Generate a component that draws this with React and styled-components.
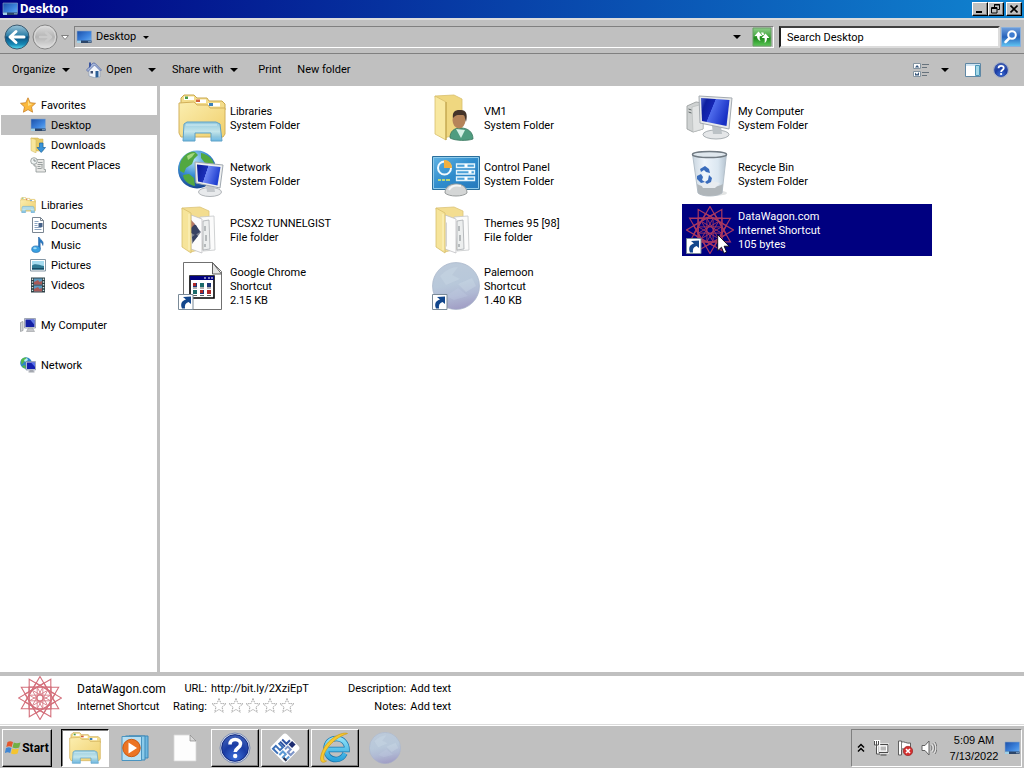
import React, { useState } from "react";
import styled, { createGlobalStyle, css } from "styled-components";

const GlobalStyle = createGlobalStyle`
  * {
    box-sizing: border-box;
  }

  body {
    margin: 0;
    background: #c0c0c0;
    color: #000;
    font-family: Roboto, "Liberation Sans", sans-serif;
    font-size: 11px;
    line-height: 14px;
  }

  button, input {
    font: inherit;
    color: inherit;
  }

  svg {
    display: block;
    flex: none;
  }
`

const Window = styled.div`
  display: flex;
  flex-direction: column;
  min-height: 100vh;
`

const TitleBar = styled.header`
  display: flex;
  align-items: center;
  height: 18px;
  padding: 0 2px;
  gap: 2px;
  background: linear-gradient(to right, #000082, #1084d0);
`

const WindowTitle = styled.h1`
  flex: 1;
  margin: 0;
  color: #fff;
  font-size: 13px;
  line-height: 16px;
  font-weight: 700;
`

const plainButton = css`
  display: flex;
  align-items: center;
  justify-content: center;
  padding: 0;
  border: none;
  background: none;
`

const raised = css`
  border: 1px solid;
  border-color: #fff #000 #000 #fff;
  box-shadow: inset -1px -1px 0 #808080;
`

const CaptionButton = styled.button`
  ${plainButton}
  ${raised}
  width: 16px;
  height: 14px;
  margin-left: ${({ $apart }) => ($apart ? "0" : "-2px")};
  background: #c0c0c0;
`

const NavBar = styled.nav`
  display: flex;
  align-items: center;
  height: 36px;
  padding: 1px 2px 0 4px;
  border-top: 2px solid #dcdcdc;
  border-bottom: 1px solid #808080;
  box-shadow: 0 1px 0 #fff;
  background: #c0c0c0;
`

const NavButton = styled.button`
  ${plainButton}
  width: ${({ $width }) => $width}px;
  height: 28px;
`

const AddressBar = styled.div`
  display: flex;
  flex: 1;
  align-items: center;
  gap: 4px;
  height: 22px;
  margin: 0 5px 0 4px;
  padding-left: 1px;
  border: 1px solid;
  border-color: #808080 #fff #fff #808080;
`

const AddressPath = styled.button`
  ${plainButton}
  flex: 1;
  justify-content: flex-start;
  gap: 4px;
`

const PathName = styled.span`
  margin-right: 3px;
`

const IconButton = styled.button`
  ${plainButton}
  width: ${({ $width }) => $width || 20}px;
  height: 20px;
`

const SearchInput = styled.input`
  width: 221px;
  height: 22px;
  padding: 0 6px;
  border: 2px solid;
  border-color: #404040 #dcdcdc #dcdcdc #202020;
  background: #fff;
  outline: none;

  &::placeholder {
    color: #000;
    opacity: 1;
  }
`

const Toolbar = styled.div`
  display: flex;
  align-items: center;
  height: 32px;
  padding: 0 15px 0 12px;
  background: #c0c0c0;
`

const ToolButton = styled.button`
  ${plainButton}
  gap: ${({ $gap }) => $gap || 7}px;
  margin-right: ${({ $after }) => $after || 16}px;
`

const Spacer = styled.div`
  flex: 1;
`

const Main = styled.div`
  display: flex;
  flex: 1;
  background: #fff;
`

const Sidebar = styled.aside`
  width: 160px;
  padding: 9px 0 0 1px;
  border-right: 3px solid #c0c0c0;
`

const NavGroup = styled.ul`
  margin: 0 0 20px;
  padding: 0;
  list-style: none;
`

const NavLink = styled.a`
  display: flex;
  align-items: center;
  gap: 5px;
  height: 20px;
  padding-left: ${({ $child }) => ($child ? 29 : 19)}px;
  background: ${({ $active }) => ($active ? "#c0c0c0" : "none")};
  color: #000;
  text-decoration: none;
`

const Label = styled.span`
  padding-top: 2px;
`

const Files = styled.main`
  display: grid;
  flex: 1;
  grid-template-columns: repeat(auto-fill, 250px);
  grid-auto-rows: 52px;
  align-content: start;
  gap: 4px;
  padding: 6px 14px;
`

const FileItem = styled.button`
  ${plainButton}
  position: relative;
  justify-content: flex-start;
  gap: 4px;
  padding-left: 4px;
  background: ${({ $selected }) => ($selected ? "#000080" : "none")};
  color: ${({ $selected }) => ($selected ? "#fff" : "#000")};
  text-align: left;
`

const FileText = styled.span`
  display: flex;
  flex-direction: column;
  padding-top: 2px;
`

const Pointer = styled.svg`
  position: absolute;
  left: 35px;
  top: 30px;
`

const Details = styled.section`
  display: flex;
  align-items: flex-start;
  height: 52px;
  padding: 0 18px;
  border-top: 4px solid #c0c0c0;
  background: #fff;
`

const DetailsName = styled.div`
  width: 96px;
  margin-left: 15px;
  padding-top: 4px;
  line-height: 18px;
`

const DetailsTitle = styled.div`
  font-size: 12px;
`

const Properties = styled.dl`
  display: grid;
  grid-template-columns: auto auto;
  grid-auto-rows: 18px;
  column-gap: 4px;
  margin: 0 39px 0 0;
  padding-top: 4px;
  line-height: 18px;

  dt {
    text-align: right;
  }

  dd {
    margin: 0;
  }
`

const Stars = styled.dd`
  display: flex;
  gap: 1px;
`

const Taskbar = styled.footer`
  display: flex;
  align-items: center;
  gap: 2px;
  height: 44px;
  padding: 2px 2px 0;
  border-top: 1px solid #dcdcdc;
  box-shadow: inset 0 1px 0 #fff;
  background: #c0c0c0;
`

const StartButton = styled.button`
  ${plainButton}
  ${raised}
  gap: 1px;
  width: 50px;
  height: 38px;
  margin-right: 7px;
  font-size: 12px;
  font-weight: 700;
`

const TaskButton = styled.button`
  ${plainButton}
  width: 48px;
  height: 38px;
  ${({ $open }) => $open && raised}
  ${({ $active }) => $active && css`
    border: 1px solid;
    border-color: #000 #fff #fff #000;
    box-shadow: inset 1px 1px 0 #808080;
    background: #fff;
  `}
`

const Tray = styled.div`
  display: flex;
  align-items: center;
  height: 38px;
  padding: 0 1px 0 5px;
  gap: 8px;
  border: 1px solid;
  border-color: #808080 #fff #fff #808080;
`

const Clock = styled.time`
  min-width: 52px;
  margin: 0 -4px 0 3px;
  font-family: "Liberation Sans", Arial, sans-serif;
  line-height: 16px;
  text-align: center;
`

const Caret = ({ size = 8 }) => (
  <svg width={size} height={size / 2} viewBox="0 0 8 4">
    <path d="M0 0h8L4 4z" fill="#000" />
  </svg>
)

const DesktopIcon = ({ size = 16 }) => (
  <svg width={size} height={size} viewBox="0 0 16 16">
    <defs>
      <linearGradient id="desk" x1="0" y1="0" x2="1" y2="1">
        <stop offset="0" stopColor="#1a4fa8" />
        <stop offset="0.6" stopColor="#3f86e0" />
        <stop offset="1" stopColor="#6fb2f0" />
      </linearGradient>
    </defs>
    <path d="M1 2h14.500v11H1z" fill="url(#desk)" stroke="#8fa6c4" strokeWidth="0.600" />
    <path d="M1 11.500h14.500V14H1z" fill="#2c4568" />
    <path d="M1 11.500h4V14H1z" fill="#9fd0e8" />
    <path d="M12 12.300h3v1h-3z" fill="#8fb0d0" />
  </svg>
)

const BackIcon = () => (
  <svg width="26" height="26" viewBox="0 0 26 26">
    <defs>
      <linearGradient id="back" x1="0" y1="0" x2="0" y2="1">
        <stop offset="0" stopColor="#9cc4d8" />
        <stop offset="0.450" stopColor="#2c7ea8" />
        <stop offset="0.500" stopColor="#0a5080" />
        <stop offset="0.800" stopColor="#1687b4" />
        <stop offset="1" stopColor="#5ce0f4" />
      </linearGradient>
    </defs>
    <circle cx="13" cy="13" r="12" fill="url(#back)" stroke="#3a5a70" />
    <path d="M6 13l6-5.500M6 13l6 5.500M6.500 13H20" fill="none" stroke="#fff" strokeWidth="3" strokeLinecap="round" />
  </svg>
)

const ForwardIcon = () => (
  <svg width="26" height="26" viewBox="0 0 26 26">
    <defs>
      <linearGradient id="fwd" x1="0" y1="0" x2="0" y2="1">
        <stop offset="0" stopColor="#dedede" />
        <stop offset="0.500" stopColor="#b4b4b4" />
        <stop offset="1" stopColor="#e4e4e4" />
      </linearGradient>
    </defs>
    <circle cx="13" cy="13" r="12" fill="url(#fwd)" stroke="#868686" />
    <circle cx="13" cy="13" r="10.500" fill="none" stroke="#dcdcdc" />
    <path d="M19 13l-5-4.500M19 13l-5 4.500M18.500 13H8" fill="none" stroke="#cacaca" strokeWidth="2.500" strokeLinecap="round" />
  </svg>
)

const RefreshIcon = () => (
  <svg width="20" height="20" viewBox="0 0 20 20">
    <defs>
      <linearGradient id="refresh" x1="0" y1="0" x2="0" y2="1">
        <stop offset="0" stopColor="#8fce8c" />
        <stop offset="0.450" stopColor="#45a840" />
        <stop offset="0.550" stopColor="#1f8a1c" />
        <stop offset="1" stopColor="#5cc858" />
      </linearGradient>
    </defs>
    <path d="M1 1h18v18H1z" fill="url(#refresh)" stroke="#68a066" />
    <path d="M6.500 4.500L2.500 9H5c0 2.500 1 4 3.500 5C7.500 12.500 7.500 11 7.800 9h2.700z" fill="#fff" />
    <path d="M9 5.500h2.500c0 1 .3 1.800.7 2.500h-2zM13.500 6.500l4 4.500H15c0 2.500-.8 4-2.500 5 .4-1.500.3-3.300 0-5h-2.800z" fill="#fff" />
  </svg>
)

const SearchIcon = () => (
  <svg width="20" height="20" viewBox="0 0 20 20">
    <defs>
      <linearGradient id="search" x1="0" y1="0" x2="0" y2="1">
        <stop offset="0" stopColor="#6f9fdc" />
        <stop offset="0.500" stopColor="#2763bb" />
        <stop offset="1" stopColor="#62c8f4" />
      </linearGradient>
    </defs>
    <path d="M0.500 0.500h19v19h-19z" fill="url(#search)" stroke="#8ab0dc" />
    <path d="M8.500 11L4.500 15" stroke="#fff" strokeWidth="2.500" strokeLinecap="round" />
    <circle cx="11" cy="8" r="3.800" fill="#3f7cd0" stroke="#fff" strokeWidth="2" />
  </svg>
)

const HouseIcon = () => (
  <svg width="16" height="16" viewBox="0 0 16 16">
    <path d="M3 8l5.500-6L14 8v7l-5 .8L3 14z" fill="#f2f5fa" stroke="#8b9cb5" strokeWidth="0.700" />
    <path d="M0.500 8L7 1l2 .2L15.500 8l-1 1L8.500 3 2 9.500z" fill="#a8b8da" stroke="#4a62a0" strokeWidth="0.700" />
    <path d="M3 .5h2V4L3 6z" fill="#3a55a0" />
    <path d="M9.500 9h3v6l-3 .5z" fill="#2a5f96" />
    <path d="M4.500 9h2.500v2.500H4.500z" fill="#3d4f74" />
  </svg>
)

const ViewIcon = () => (
  <svg width="16" height="16" viewBox="0 0 16 16">
    <path d="M.5 1.500h7v5h-7zM.5 9.500h7v5h-7z" fill="#fff" stroke="#8494a0" />
    <path d="M2 5.500l2-2.500 2.500 2.500zM2 13.500v-3l2 2 2-2.500v3.500z" fill="#35557a" />
    <path d="M9 2.500h7M9 5.500h5M9 10.500h7M9 13.500h5" stroke="#66727c" />
  </svg>
)

const PaneIcon = () => (
  <svg width="16" height="16" viewBox="0 0 16 16">
    <path d="M0.500 1.500h15v13h-15z" fill="#fff" stroke="#5f87a4" />
    <path d="M1 2h14v2H1z" fill="#cfe4f2" />
    <path d="M10.500 3.500h4v10h-4z" fill="#a4d8e8" stroke="#4a96b8" />
  </svg>
)

const HelpIcon = ({ size = 16 }) => (
  <svg width={size} height={size} viewBox="0 0 32 32">
    <defs>
      <radialGradient id="help" cx="0.500" cy="0.850" r="0.900">
        <stop offset="0" stopColor="#3d70d8" />
        <stop offset="0.500" stopColor="#1a3ca4" />
        <stop offset="1" stopColor="#4567bc" />
      </radialGradient>
    </defs>
    <circle cx="16" cy="16" r="15" fill="#d4dcec" stroke="#7a8cb4" />
    <circle cx="16" cy="16" r="13.300" fill="url(#help)" stroke="#102880" />
    <path d="M11 12.500c0-3 2-5 5.200-5s5.300 1.800 5.300 4.500c0 4-5.300 4-5.300 8" fill="none" stroke="#fff" strokeWidth="3.500" />
    <circle cx="16.200" cy="24" r="2.200" fill="#fff" />
  </svg>
)

const StarIcon = () => (
  <svg width="16" height="16" viewBox="0 0 16 16">
    <path d="M8 .8l2.200 4.900 5.300.6-4 3.600 1.100 5.300L8 12.600l-4.600 2.600 1.100-5.300-4-3.600 5.300-.6z" fill="#fbb93c" stroke="#c9822a" strokeWidth="0.800" />
    <path d="M8 3l1.300 3.500 3.200.5L8 9z" fill="#fee08a" />
  </svg>
)

const DownloadsIcon = () => (
  <svg width="16" height="16" viewBox="0 0 16 16">
    <path d="M1 1h7l1 1h4v12H4z" fill="#e8cc68" stroke="#c7a84a" strokeWidth="0.500" />
    <path d="M1 1l5 1.500V16L1 13.500z" fill="#f8e69c" stroke="#cdb15a" strokeWidth="0.500" />
    <path d="M9.500 6h3.500v4.500h2.500L11.200 15.500 7 10.500h2.500z" fill="#3b94d8" stroke="#1a64a8" strokeWidth="0.700" />
  </svg>
)

const RecentIcon = () => (
  <svg width="16" height="16" viewBox="0 0 16 16">
    <path d="M4 2.500h10v10h1.500V15H6V9H4z" fill="#e8e8e6" stroke="#8e9494" strokeWidth="0.800" />
    <path d="M8 5.500h4.500M7.500 7.500h5M7.500 9.500h3M7.500 11.500h4M12 11.500V7" stroke="#9aa0a0" />
    <circle cx="4" cy="4" r="3.300" fill="#eef2f2" stroke="#8a9292" strokeWidth="0.800" />
    <path d="M4 2v2h2" fill="none" stroke="#7b8383" strokeWidth="0.900" />
  </svg>
)

const LibrariesIcon = ({ size = 48 }) => (
  <svg width={size} height={size} viewBox="0 0 48 48">
    <defs>
      <linearGradient id="libf" x1="0" y1="0" x2="1" y2="1">
        <stop offset="0" stopColor="#fbeeb0" />
        <stop offset="1" stopColor="#f0cf6c" />
      </linearGradient>
      <linearGradient id="libs" x1="0" y1="0" x2="0" y2="1">
        <stop offset="0" stopColor="#8cc8e4" />
        <stop offset="0.500" stopColor="#bfe6f4" />
        <stop offset="1" stopColor="#5fb0dc" />
      </linearGradient>
    </defs>
    <path d="M3 12V4l3-3h10l3 3h10l2 3h13l3 3v6z" fill="#f4dd8c" stroke="#c9a94e" />
    <path d="M6 2.500h10V6H6zM18 5.500h10V9H18zM30 9h12v3.500H30z" fill="#fff" />
    <path d="M7 2.500h3V5H7z" fill="#4a9a48" />
    <path d="M18 5.500h4V8h-4z" fill="#d0603a" />
    <path d="M31 9h4v3h-4z" fill="#3c80b8" />
    <path d="M1 9l15-1 3 3h11l2 3h15v26l-2 3H3l-2-4z" fill="url(#libf)" stroke="#d2b05a" />
    <path d="M6 30l3-2h29l4 2 2 17H33V39H17v8H5z" fill="url(#libs)" fillOpacity="0.920" stroke="#5fa2c8" />
    <path d="M8 31h31" stroke="#e6f8fe" strokeOpacity="0.700" />
  </svg>
)

const DocumentsIcon = () => (
  <svg width="16" height="16" viewBox="0 0 16 16">
    <path d="M2.500.500h8l3 3v12h-11z" fill="#fff" stroke="#7b8692" />
    <path d="M10.500.500v3h3" fill="none" stroke="#7b8692" />
    <path d="M4.500 4.500h4M4.500 6.500h3M4.500 8.500h3M4.500 10.500h7M4.500 12.500h7" stroke="#8ca4c0" />
    <path d="M8.500 6h4v4h-4z" fill="#46628a" />
  </svg>
)

const MusicIcon = () => (
  <svg width="16" height="16" viewBox="0 0 16 16">
    <path d="M9 0c1 3 5.500 3.500 3.800 8.500C12.500 6 11 5.300 10.200 5.200V12H8.500V0z" fill="#2878c0" stroke="#1c5ca0" strokeWidth="0.500" />
    <ellipse cx="6" cy="12.200" rx="4.300" ry="3.300" fill="#3aa0e0" stroke="#1c68ac" strokeWidth="0.600" />
    <ellipse cx="5" cy="11.300" rx="1.800" ry="1" fill="#a0dcf8" />
  </svg>
)

const PicturesIcon = () => (
  <svg width="16" height="16" viewBox="0 0 16 16">
    <path d="M.5 2.500h15v11.500H.5z" fill="#fff" stroke="#8496a4" />
    <path d="M2 4h12v8.500H2z" fill="#a6dcf0" />
    <path d="M2 8.500c3-2.500 6-1 12 .5v3.500H2z" fill="#2f7a94" />
    <path d="M2 11h12v1.500H2z" fill="#164c66" />
  </svg>
)

const VideosIcon = () => (
  <svg width="16" height="16" viewBox="0 0 16 16">
    <path d="M1 .5h14v15H1z" fill="#2c4046" />
    <path d="M4 1.500h8v6H4zM4 8.500h8v6H4z" fill="#5d9ac0" />
    <path d="M4 5l4-2 1.500 2L12 4v3.500H4zM4 12l4-2 1.500 2L12 11v3.500H4z" fill="#a85a58" />
    <path d="M2.500 1.500v13M13.500 1.500v13" stroke="#d4e4e4" strokeWidth="1.400" strokeDasharray="1.400 1.400" />
  </svg>
)

const SmallComputerIcon = () => (
  <svg width="16" height="16" viewBox="0 0 16 16">
    <path d="M.5 5.500L3 4.500v9l-2.500 1z" fill="#d4d6d8" stroke="#8c9094" strokeWidth="0.700" />
    <path d="M4.500 1.500h11v9.500h-11z" fill="#e0e2e6" stroke="#8c94a4" strokeWidth="0.800" />
    <path d="M5.500 2.500h9v7.500h-9z" fill="#1420a4" />
    <path d="M10 2.500h4.500V8z" fill="#6078e4" />
    <path d="M8.500 11h4l2 3.500h-8z" fill="#c4c6ca" stroke="#989ca0" strokeWidth="0.600" />
  </svg>
)

const SmallNetworkIcon = () => (
  <svg width="16" height="16" viewBox="0 0 16 16">
    <circle cx="6" cy="6" r="5.800" fill="#2f86c8" />
    <path d="M1 3c2-3 5-3 6-2L4 5 1.500 8zM2 9l3-1 1 3.500C4 11.500 2.500 10.500 2 9z" fill="#54b848" />
    <path d="M4 3l3-2 1 2-3 2z" fill="#b8ecf8" />
    <path d="M6 4.500h9.500V13H6z" fill="#d8dce4" stroke="#6c7898" strokeWidth="0.600" />
    <path d="M7 5.500h8V12H7z" fill="#1420b0" />
    <path d="M11 5.500h4v4.500z" fill="#5870ec" />
    <path d="M9.500 13h4v1.300h1v1.200H8.500v-1.200h1z" fill="#a4a8b0" />
  </svg>
)

const ComputerIcon = () => (
  <svg width="48" height="48" viewBox="0 0 48 48">
    <defs>
      <linearGradient id="screen" x1="0" y1="0" x2="1" y2="0.400">
        <stop offset="0" stopColor="#4a60d0" />
        <stop offset="0.200" stopColor="#0e1fa0" />
        <stop offset="0.450" stopColor="#1626b4" />
        <stop offset="0.470" stopColor="#4f6cec" />
        <stop offset="1" stopColor="#1830c4" />
      </linearGradient>
    </defs>
    <path d="M1 12l9-4 7 1v26l-10 3-6-3z" fill="#cfd2d2" stroke="#a4a8a8" />
    <path d="M6 13l11-3v25L7 38z" fill="#e2e4e4" stroke="#b4b8b8" strokeWidth="0.600" />
    <path d="M2.500 15l3 1M2.500 18l3 1" stroke="#606868" />
    <ellipse cx="30" cy="40.500" rx="13" ry="4.500" fill="#e4e6e8" stroke="#aab0b4" />
    <path d="M26 32h9l1 8h-9z" fill="#bcc2c6" />
    <path d="M13 2l33 2-3 31-29-6z" fill="#e8eaea" stroke="#a4aab0" />
    <path d="M15 4l28.500 2-3 26L16 27z" fill="url(#screen)" />
  </svg>
)

const NetworkIcon = () => (
  <svg width="48" height="48" viewBox="0 0 48 48">
    <defs>
      <radialGradient id="globe" cx="0.400" cy="0.250" r="0.800">
        <stop offset="0" stopColor="#b4e4fa" />
        <stop offset="0.500" stopColor="#3a8cd4" />
        <stop offset="1" stopColor="#123c86" />
      </radialGradient>
      <linearGradient id="netscreen" x1="0" y1="0" x2="1" y2="0.300">
        <stop offset="0" stopColor="#0c1c98" />
        <stop offset="0.450" stopColor="#1c30b8" />
        <stop offset="0.470" stopColor="#7088f4" />
        <stop offset="1" stopColor="#2040d0" />
      </linearGradient>
    </defs>
    <circle cx="19" cy="19.500" r="19" fill="url(#globe)" />
    <path d="M4 9C8 3 13 1 17 2l3 3-4 4-2 5-6 4-2 5-4-2C1 17 2 12 4 9zM5 25l6-1 5 4 1 8c-6-1-12-6-12-11zM23 3c6 1 12 6 13 11l-4 1-5-2-4-5z" fill="#52a840" />
    <path d="M9 6c3-2 5-3 8-3l-3 4-4 3z" fill="#a4d880" />
    <ellipse cx="32" cy="42" rx="11.500" ry="4.500" fill="#e8eaec" stroke="#b0b4b8" />
    <path d="M28 35h8l1 7h-8z" fill="#c4c8cc" />
    <path d="M17 12l28 3-3 23-24-5z" fill="#eef0f0" stroke="#a0a8b0" />
    <path d="M19 14.500l23.500 2.500-3 18.500L20 31.500z" fill="url(#netscreen)" />
  </svg>
)

const UserFolderIcon = () => (
  <svg width="48" height="48" viewBox="0 0 48 48">
    <path d="M3 2l19-1 8 4v34l-18 5z" fill="#efd780" stroke="#d8bf6c" strokeWidth="0.800" />
    <path d="M3 2l11 6v38L3 40z" fill="#f8e8a0" stroke="#d8bf6c" strokeWidth="0.800" />
    <path d="M14 8v38" stroke="#b99b40" />
    <path d="M18 44c0-7 4-10 11-10s12 4 12 11c-5 2-18 2-23-1z" fill="#4f9c80" stroke="#36755c" strokeWidth="0.800" />
    <path d="M24 35l5 9 4-8z" fill="#d6f0e6" />
    <ellipse cx="27" cy="26" rx="6.500" ry="8.500" fill="#b5845a" />
    <path d="M21 24c-1-6 2-8.500 8-8 5 0 7 4 5 12-1-3-1-7-3-7-4 0-7-1-10 3z" fill="#44342a" />
  </svg>
)

const ControlPanelIcon = () => (
  <svg width="48" height="48" viewBox="0 0 48 48">
    <defs>
      <linearGradient id="cp" x1="0" y1="0" x2="1" y2="1">
        <stop offset="0" stopColor="#62b4e4" />
        <stop offset="0.500" stopColor="#2f8ccc" />
        <stop offset="1" stopColor="#2478bc" />
      </linearGradient>
    </defs>
    <path d="M.5 6.500h47v33H.5z" fill="url(#cp)" stroke="#2b6f9c" />
    <path d="M1.500 7.500h45v31h-45z" fill="none" stroke="#90ccec" />
    <circle cx="12.500" cy="18" r="6.500" fill="none" stroke="#f2fafe" strokeWidth="2" />
    <path d="M12 18V10a7.500 7.500 0 0 1 8 8z" fill="#f0b040" />
    <path d="M6 30h3M10 30h3M14 30h4" stroke="#b8d878" strokeWidth="2" />
    <path d="M24.500 14h18v3.500h-18zM24.500 20.500h18V24h-18zM24.500 27h18v3.500h-18z" fill="#4aa0d8" stroke="#e4f4fc" strokeWidth="1.300" />
    <path d="M34 14v3M38 20.500v3M34 27v3" stroke="#fff" strokeWidth="3" />
    <path d="M13 43c0-6 5-9 11-9s11 3 11 9c-4 4-18 4-22 0z" fill="#d4d6d6" stroke="#989c9c" />
    <path d="M17 40c2-4 7-5 12-4" fill="none" stroke="#f4f4f4" strokeWidth="2" />
  </svg>
)

const RecycleBinIcon = () => (
  <svg width="48" height="48" viewBox="0 0 48 48">
    <defs>
      <linearGradient id="bin" x1="0" y1="0" x2="1" y2="0">
        <stop offset="0" stopColor="#c8d4de" />
        <stop offset="0.350" stopColor="#eff5fb" />
        <stop offset="0.750" stopColor="#dbe7f1" />
        <stop offset="1" stopColor="#b4c2ce" />
      </linearGradient>
    </defs>
    <ellipse cx="27" cy="43" rx="14" ry="3" fill="#e2e4e4" />
    <path d="M6.500 4h34L36 43c-5 4-20 4-24 0z" fill="url(#bin)" stroke="#b4c0ca" />
    <path d="M11 34c6 4 20 4 26 0l-1 9c-5 4-20 4-24 0z" fill="#b0b6ba" />
    <path d="M14 33l8-3 12 3-5 5H17z" fill="#e8ecf0" />
    <ellipse cx="23.500" cy="4.500" rx="17" ry="3" fill="#dfe7ed" stroke="#707a82" strokeWidth="1.500" />
    <path d="M14 19l5-3 4 3 1 4-4-1-2-2-3 2zM11 26l4-2 2 3-1 3 3 2-4 1-4-4zM19 32l3-2 1-5 3 3-1 4-4 2z" fill="#3a6cbc" />
  </svg>
)

const FolderIcon = ({ photo }) => (
  <svg width="48" height="48" viewBox="0 0 48 48">
    <path d="M4 2l18-1 9 4v36l-18 5z" fill="#f3dd90" stroke="#dcc47a" strokeWidth="0.800" />
    <path d="M22 11l14-1 1 34-12 1z" fill="#fbfbfb" stroke="#c4c6c8" strokeWidth="0.800" />
    <path d="M25 15l6-1 1 29-7 1z" fill="#eceeee" stroke="#a8acb0" strokeWidth="0.800" />
    <path d="M27 20v5M28 29v6M27 38v3" stroke="#80868a" />
    <path d="M13 9l11 4v34l-11-4z" fill="#fcfcfc" stroke="#c0c0c4" strokeWidth="0.800" />
    {photo ? (
      <g>
        <path d="M13 14l10 12-9 12z" fill="#7c8290" />
        <path d="M13 17l5 2 4 7-5 3-4-2zM14 31l4-3 2 2-5 6z" fill="#384262" />
        <path d="M13 14l4 4-4 4z" fill="#b47868" />
      </g>
    ) : (
      <path d="M14 16l1 1v24l-1-1z" fill="#d4d4d4" />
    )}
    <path d="M4 2l9 5v40L4 41z" fill="#f6e49a" stroke="#d8bf6c" strokeWidth="0.800" />
    <path d="M11 8v36" stroke="#fdf4c4" />
  </svg>
)

const ShortcutArrow = () => (
  <g>
    <path d="M.5 32.500h14.500v15H.5z" fill="#fff" stroke="#7a8a98" />
    <path d="M4 46.500c-2-5 0-8 4-9l-3-2.500 8-.5v7.500l-2.500-2c-3 1-4 3-3.500 6.500z" fill="#12468c" />
  </g>
)

const ProgramIcon = () => (
  <svg width="48" height="48" viewBox="0 0 48 48">
    <path d="M5.500.500h29l9 9v38h-38z" fill="#fff" stroke="#707070" />
    <path d="M34.500.500v11.500h9z" fill="#e4e4e4" stroke="#606060" />
    <path d="M12 14h24v22H12z" fill="#fff" stroke="#000" strokeWidth="1.600" />
    <path d="M12 14h24v4H12z" fill="#000080" />
    <path d="M26 16h2M30 16h2M33 16h2" stroke="#fff" />
    <path d="M15 21h4v4h-4zM22 28h4v4h-4zM29 21h4v4h-4z" fill="#203878" />
    <path d="M22 21h4v4h-4zM15 28h4v4h-4z" fill="#1a6a6a" />
    <path d="M15 21h3v3h-3zM29 28h4v4h-4zM22 28h3v3h-3z" fill="#b02828" />
    <path d="M15 26h4M22 26h4M29 26h4M15 33.500h4M22 33.500h4M29 33.500h4" stroke="#606060" />
    <ShortcutArrow />
  </svg>
)

const MoonIcon = ({ size = 48, shortcut }) => (
  <svg width={size} height={size} viewBox="0 0 48 48">
    <defs>
      <linearGradient id="moon" x1="0.400" y1="0" x2="0.600" y2="1">
        <stop offset="0" stopColor="#bccada" />
        <stop offset="0.450" stopColor="#b8c8da" />
        <stop offset="0.700" stopColor="#b0bad4" />
        <stop offset="1" stopColor="#a09cc4" />
      </linearGradient>
    </defs>
    <circle cx="24" cy="24" r="23.500" fill="url(#moon)" stroke="#a8b4c8" strokeWidth="0.700" />
    <path d="M8 14c6-6 12-9 18-9l-6 8 8 4-14 6zM26 22l14-6 4 8-10 6z" fill="#cfdde8" fillOpacity="0.350" />
    <path d="M14 34l12-8 10 8-14 4z" fill="#c4cce4" fillOpacity="0.300" />
    {shortcut && <ShortcutArrow />}
  </svg>
)

const starPoints = (count, step, radius, turn = 0) => {
  const points = []
  for (let i = 0; i < count; i++) {
    const angle = ((i * step * 360) / count + turn - 90) * (Math.PI / 180)
    points.push(`${(24 + radius * Math.cos(angle)).toFixed(1)},${(24 + radius * Math.sin(angle)).toFixed(1)}`)
  }
  return points.join(" ")
}

// outer ring of overlapping triangles, smaller rings turned in between
const WagonIcon = ({ size = 48, color = "#d4707c", shortcut }) => (
  <svg width={size} height={size} viewBox="0 0 48 48">
    <g fill="none" stroke={color}>
      {[0, 30, 60, 90].map((turn) => (
        <polygon key={turn} points={starPoints(3, 1, 23.500, turn)} strokeWidth="1.200" />
      ))}
      {[15, 45, 75].map((turn) => (
        <polygon key={turn} points={starPoints(4, 1, 17, turn)} strokeWidth="1.200" />
      ))}
      <polygon points={starPoints(12, 5, 12, 15)} strokeWidth="0.900" />
    </g>
    {shortcut && <ShortcutArrow />}
  </svg>
)

const RatingStar = () => (
  <svg width="16" height="16" viewBox="0 0 16 16">
    <path d="M8 .5l1.900 5 5.100.3-4 3.300 1.300 5.100L8 11.400l-4.300 2.800L5 9.100 1 5.800l5.100-.3z" fill="#fff" stroke="#a4a4a4" strokeDasharray="1.500 0.800" />
  </svg>
)

const WindowsLogo = () => (
  <svg width="16" height="16" viewBox="0 0 16 16">
    <path d="M2.500 2c2-1.200 3.500-1 5.500 0L6.700 7C4.800 6 3.300 6 1.300 7z" fill="#e4572e" />
    <path d="M8.800 2.500c2 1 3.900 1 6.700 0L14.200 7.500c-2.200 1-4.500 1-6.700 0z" fill="#72b043" />
    <path d="M1 8c2-1 3.500-1 5.400 0L5.200 13C3.300 12 2 12-.2 13z" fill="#3f86d4" />
    <path d="M7.200 8.500c2 1 4.300 1 6.700 0L12.600 13.500c-2 1-4.600 1-6.600 0z" fill="#f4c430" />
  </svg>
)

const MediaIcon = () => (
  <svg width="28" height="28" viewBox="0 0 28 28">
    <path d="M8 2h19v22H8z" fill="#6fb8e0" stroke="#3c88b8" />
    <path d="M4.500 2h19.500v24H4.500z" fill="#8ccbea" stroke="#3c88b8" />
    <path d="M1 2.500h19.500v24H1z" fill="#b8dff2" stroke="#4a94c0" />
    <circle cx="10.500" cy="14" r="8.700" fill="#ec7424" stroke="#c85a14" />
    <path d="M7.500 8.500l8.500 5.500-8.500 5.500z" fill="#fff" />
  </svg>
)

const PageIcon = () => (
  <svg width="24" height="28" viewBox="0 0 24 28">
    <path d="M1 1h16l6 6v20H1z" fill="#fdfdfd" stroke="#d8d8d8" strokeWidth="0.800" />
    <path d="M17 1v6h6z" fill="#d8d8d8" stroke="#888" strokeWidth="0.700" />
  </svg>
)

const Pcsx2Icon = () => (
  <svg width="32" height="32" viewBox="0 0 32 32">
    <g transform="rotate(-45 16 16)">
      <rect x="5" y="5" width="22" height="22" rx="3" fill="#fff" />
      <g fill="none" strokeWidth="2">
        <path d="M7 15V8h4v6h4V8" stroke="#3c70b8" />
        <path d="M17 15V8M20 8v6h5" stroke="#3054a4" />
        <path d="M7 17h5v4H8v4h5" stroke="#5c9ad4" />
        <path d="M15 17h4v4h-4v4h5" stroke="#7c94c8" />
      </g>
      <path d="M21 16h5v5h-5z" fill="#1c2c70" />
      <path d="M7 23h2v4H7z" fill="#303048" transform="translate(0 -1)" />
    </g>
  </svg>
)

const ExplorerIcon = () => (
  <svg width="32" height="32" viewBox="0 0 32 32">
    <defs>
      <linearGradient id="ie" x1="0" y1="0" x2="0" y2="1">
        <stop offset="0" stopColor="#8ce0f8" />
        <stop offset="1" stopColor="#2ca4dc" />
      </linearGradient>
    </defs>
    <path d="M9 17.500h19c0-6-4-11-10.500-11S7 11 7 17s4 10.500 10 10.500c4 0 7-2 9-6" fill="none" stroke="#1a78b0" strokeWidth="5.500" />
    <path d="M9 17.500h19c0-6-4-11-10.500-11S7 11 7 17s4 10.500 10 10.500c4 0 7-2 9-6" fill="none" stroke="url(#ie)" strokeWidth="4" />
    <path d="M28.500 1.500C22-1 4 9 1.500 26c0 5 3 5 6 3-8 0 1-21 21-27.500z" fill="#f6c830" stroke="#cf9c18" strokeWidth="0.700" />
  </svg>
)

const TrayNetworkIcon = () => (
  <svg width="16" height="16" viewBox="0 0 16 16">
    <path d="M5.500 4.500h10v8h-10z" fill="#b8b8b8" stroke="#fff" strokeWidth="2" />
    <path d="M5.500 4.500h9.500v8H5.500zM7.500 15h6" fill="none" stroke="#484848" />
    <path d="M7 6h6.500v5H7z" fill="none" stroke="#fff" />
    <path d="M1 1h5v4H4.500v9" fill="#fff" stroke="#fff" strokeWidth="2.400" />
    <path d="M1.500 1v4h4V1M3.500 1v13H7" fill="none" stroke="#505050" />
  </svg>
)

const FlagIcon = () => (
  <svg width="16" height="16" viewBox="0 0 16 16">
    <path d="M1.500 1h3v1c3-1 5 2 9 1v7c-4 1-6-2-9-1v6h-3z" fill="#fff" stroke="#606060" />
    <path d="M4.500 2v8" stroke="#808080" />
    <circle cx="11" cy="11" r="4.700" fill="#d43030" stroke="#901818" strokeWidth="0.600" />
    <path d="M9 9l4 4M13 9l-4 4" stroke="#fff" strokeWidth="1.600" />
  </svg>
)

const SpeakerIcon = () => (
  <svg width="16" height="16" viewBox="0 0 16 16">
    <path d="M1 5.500h3L8 1v14l-4-4.500H1z" fill="#fff" stroke="#606060" />
    <path d="M10 5.500c1.200 1.500 1.200 3.500 0 5M12 3.500c2.200 2.500 2.200 6.500 0 9M14 2c2.500 3.500 2.500 8.500 0 12" fill="none" stroke="#707070" />
    <path d="M11 4.500c1.500 2.200 1.500 4.800 0 7M13 2.500c2.300 3 2.300 8 0 11" fill="none" stroke="#f4f4f4" strokeWidth="0.800" />
  </svg>
)

const sidebarGroups = [
  [
    { name: "Favorites", icon: <StarIcon /> },
    { name: "Desktop", icon: <DesktopIcon />, child: true },
    { name: "Downloads", icon: <DownloadsIcon />, child: true },
    { name: "Recent Places", icon: <RecentIcon />, child: true },
  ],
  [
    { name: "Libraries", icon: <LibrariesIcon size={16} /> },
    { name: "Documents", icon: <DocumentsIcon />, child: true },
    { name: "Music", icon: <MusicIcon />, child: true },
    { name: "Pictures", icon: <PicturesIcon />, child: true },
    { name: "Videos", icon: <VideosIcon />, child: true },
  ],
  [{ name: "My Computer", icon: <SmallComputerIcon /> }],
  [{ name: "Network", icon: <SmallNetworkIcon /> }],
]

const files = [
  { name: "Libraries", type: "System Folder", icon: <LibrariesIcon /> },
  { name: "VM1", type: "System Folder", icon: <UserFolderIcon /> },
  { name: "My Computer", type: "System Folder", icon: <ComputerIcon /> },
  { name: "Network", type: "System Folder", icon: <NetworkIcon /> },
  { name: "Control Panel", type: "System Folder", icon: <ControlPanelIcon /> },
  { name: "Recycle Bin", type: "System Folder", icon: <RecycleBinIcon /> },
  { name: "PCSX2 TUNNELGIST", type: "File folder", icon: <FolderIcon photo /> },
  { name: "Themes 95 [98]", type: "File folder", icon: <FolderIcon /> },
  { name: "DataWagon.com", type: "Internet Shortcut", size: "105 bytes", icon: <WagonIcon color="#a83860" shortcut />, pointer: true },
  { name: "Google Chrome", type: "Shortcut", size: "2.15 KB", icon: <ProgramIcon /> },
  { name: "Palemoon", type: "Shortcut", size: "1.40 KB", icon: <MoonIcon shortcut /> },
]

const App = () => {
  const [selected, setSelected] = useState("DataWagon.com")
  const [search, setSearch] = useState("")

  return (
    <Window>
      <GlobalStyle />
      <TitleBar>
        <DesktopIcon />
        <WindowTitle>Desktop</WindowTitle>
        <CaptionButton aria-label="Minimize">
          <svg width="8" height="8" viewBox="0 0 8 8"><path d="M0 6h6v2H0z" /></svg>
        </CaptionButton>
        <CaptionButton aria-label="Restore">
          <svg width="10" height="10" viewBox="0 0 10 10">
            <path d="M3.500 3V.500h5v5H6.500M3 1h6M.5 3.500h5.500v5.500H.5zM.5 4.500h5.500" fill="none" stroke="#000" />
          </svg>
        </CaptionButton>
        <CaptionButton aria-label="Close" $apart>
          <svg width="8" height="8" viewBox="0 0 8 8"><path d="M.5.500l7 7M7.500.500l-7 7" stroke="#000" strokeWidth="1.600" /></svg>
        </CaptionButton>
      </TitleBar>

      <NavBar>
        <NavButton aria-label="Back" $width={26}><BackIcon /></NavButton>
        <NavButton aria-label="Forward" $width={30}><ForwardIcon /></NavButton>
        <NavButton aria-label="Recent pages" $width={10}>
          <svg width="8" height="5" viewBox="0 0 8 5"><path d="M.5.500h7L4 4.500z" fill="#fff" stroke="#808080" /></svg>
        </NavButton>
        <AddressBar>
          <AddressPath>
            <DesktopIcon />
            <PathName>Desktop</PathName>
            <Caret size={6} />
          </AddressPath>
          <IconButton aria-label="Previous locations"><Caret /></IconButton>
          <IconButton aria-label="Refresh" $width={22}><RefreshIcon /></IconButton>
        </AddressBar>
        <SearchInput
          aria-label="Search Desktop"
          placeholder="Search Desktop"
          value={search}
          onChange={(e) => setSearch(e.target.value)}
        />
        <IconButton aria-label="Search" $width={22}><SearchIcon /></IconButton>
      </NavBar>

      <Toolbar>
        <ToolButton>Organize <Caret /></ToolButton>
        <ToolButton $gap={4}><HouseIcon />Open</ToolButton>
        <ToolButton aria-label="Open with"><Caret /></ToolButton>
        <ToolButton $after={20}>Share with <Caret /></ToolButton>
        <ToolButton>Print</ToolButton>
        <ToolButton>New folder</ToolButton>
        <Spacer />
        <ToolButton aria-label="Change view" $gap={12}><ViewIcon /><Caret /></ToolButton>
        <ToolButton aria-label="Preview pane" $after={12}><PaneIcon /></ToolButton>
        <IconButton aria-label="Help" $width={16}><HelpIcon /></IconButton>
      </Toolbar>

      <Main>
        <Sidebar>
          {sidebarGroups.map((group) => (
            <NavGroup key={group[0].name}>
              {group.map((item) => (
                <li key={item.name}>
                  <NavLink href="#" $child={item.child} $active={item.name === "Desktop"}>
                    {item.icon}
                    <Label>{item.name}</Label>
                  </NavLink>
                </li>
              ))}
            </NavGroup>
          ))}
        </Sidebar>
        <Files>
          {files.map((file) => (
            <FileItem key={file.name} $selected={file.name === selected} onClick={() => setSelected(file.name)}>
              {file.icon}
              <FileText>
                <span>{file.name}</span>
                <span>{file.type}</span>
                {file.size && <span>{file.size}</span>}
              </FileText>
              {file.pointer && (
                <Pointer width="13" height="21" viewBox="0 0 13 21">
                  <path d="M.7.700v16l3.800-3.500 2.500 6 2.600-1.100-2.500-5.900h5z" fill="#fff" stroke="#000" strokeWidth="0.800" />
                </Pointer>
              )}
            </FileItem>
          ))}
        </Files>
      </Main>

      <Details>
        <WagonIcon size={44} />
        <DetailsName>
          <DetailsTitle>DataWagon.com</DetailsTitle>
          <div>Internet Shortcut</div>
        </DetailsName>
        <Properties>
          <dt>URL:</dt>
          <dd>http://bit.ly/2XziEpT</dd>
          <dt>Rating:</dt>
          <Stars>
            {[1, 2, 3, 4, 5].map((n) => <RatingStar key={n} />)}
          </Stars>
        </Properties>
        <Properties>
          <dt>Description:</dt>
          <dd>Add text</dd>
          <dt>Notes:</dt>
          <dd>Add text</dd>
        </Properties>
      </Details>

      <Taskbar>
        <StartButton><WindowsLogo />Start</StartButton>
        <TaskButton aria-label="Libraries" $active><LibrariesIcon size={32} /></TaskButton>
        <TaskButton aria-label="Media Player"><MediaIcon /></TaskButton>
        <TaskButton aria-label="Document"><PageIcon /></TaskButton>
        <TaskButton aria-label="Help" $open><HelpIcon size={32} /></TaskButton>
        <TaskButton aria-label="PCSX2" $open><Pcsx2Icon /></TaskButton>
        <TaskButton aria-label="Internet Explorer" $open><ExplorerIcon /></TaskButton>
        <TaskButton aria-label="Palemoon"><MoonIcon size={32} /></TaskButton>
        <Spacer />
        <Tray>
          <svg width="8" height="10" viewBox="0 0 8 10">
            <path d="M1 4.500l3-3 3 3M1 8.500l3-3 3 3" fill="none" stroke="#000" strokeWidth="1.500" />
          </svg>
          <TrayNetworkIcon />
          <FlagIcon />
          <SpeakerIcon />
          <Clock>
            5:09 AM
            <br />
            7/13/2022
          </Clock>
          <DesktopIcon />
        </Tray>
      </Taskbar>
    </Window>
  )
}

export default App
